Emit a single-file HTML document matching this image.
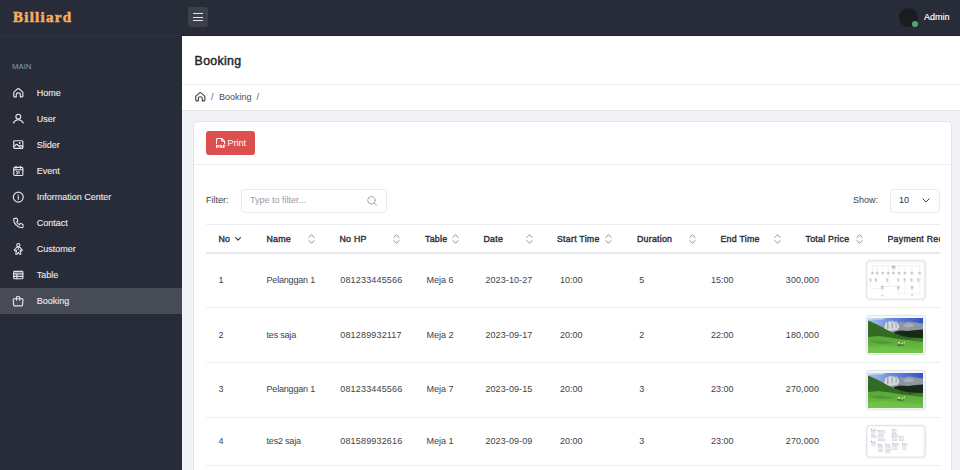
<!DOCTYPE html>
<html><head><meta charset="utf-8">
<style>
*{margin:0;padding:0;box-sizing:border-box}
html,body{width:960px;height:470px;overflow:hidden;background:#f2f3f7;font-family:"Liberation Sans",sans-serif}
.a{position:absolute;white-space:nowrap;line-height:1}
#side{position:absolute;left:0;top:0;width:182px;height:470px;background:#282c38}
#top{position:absolute;left:182px;top:0;width:778px;height:36px;background:#282c38;border-bottom:1px solid #1e2129}
.logo{left:13px;top:9px;font-family:"Liberation Serif",serif;font-weight:bold;font-size:16px;color:#f2a553;letter-spacing:0.6px}
.sb{position:absolute;left:0;top:35px;width:182px;height:1px;background:#30343e}
.main{left:12px;top:63.1px;font-size:7.75px;color:#9699a1}
.mi{position:absolute;left:0;width:182px;height:26px}
.mi.act{background:#474b55}
.mi>svg{position:absolute;left:13px;top:8px;width:10px;height:10px;overflow:visible}
.mi span{position:absolute;left:36.8px;top:8.6px;font-size:9px;line-height:1;color:#e8e9ec;white-space:nowrap;-webkit-text-stroke:0.12px #e8e9ec}
#ph{position:absolute;left:182px;top:36px;width:778px;height:49px;background:#fff;border-bottom:1px solid #eef0f3}
#bc{position:absolute;left:182px;top:85px;width:778px;height:26px;background:#fff;border-bottom:1px solid #e6e8ec}
#card{position:absolute;left:193px;top:121px;width:759px;height:380px;background:#fff;border:1px solid #e2e4e9;border-radius:5px}
.th{font-size:8.8px;color:#30343c;top:234.5px;-webkit-text-stroke:0.4px #30343c;letter-spacing:0.25px}
.td{font-size:9px;color:#3d424a}
.sort{position:absolute;width:7px;height:10px;top:233.7px}
.hr{position:absolute;left:206px;width:734px;height:1px;background:#eceef1}
.img{position:absolute;left:865px;width:61px;background:#fff;border:1px solid #e9eaee;border-radius:4px;box-shadow:0 0 0 1px #f1f2f5;overflow:hidden}
</style></head><body>
<div id="side">
  <svg style="position:absolute;left:0;top:0" width="100" height="34"><text x="13" y="22.1" font-family="Liberation Serif" font-weight="bold" font-size="15" fill="#f4ae60" stroke="#f4ae60" stroke-width="0.55" textLength="58" lengthAdjust="spacing">Billiard</text></svg>
  <div class="sb"></div>
  <div class="a main">MAIN</div>
  <div class="mi" style="top:80px"><svg viewBox="0 0 10 10" fill="none" stroke="#e6e7ea" stroke-width="1.15" stroke-linecap="round" stroke-linejoin="round"><path d="M0.75 4.6Q0.75 4.2 1.1 3.9L4.7 0.8Q5.3 0.3 5.9 0.8L9.5 3.9Q9.85 4.2 9.85 4.6V7.9Q9.85 8.85 8.9 8.85H7.3V6.6Q7.3 4.8 5.3 4.8Q3.3 4.8 3.3 6.6V8.85H1.7Q0.75 8.85 0.75 7.9Z"/></svg><span>Home</span></div>
  <div class="mi" style="top:106px"><svg viewBox="0 0 10 10" fill="none" stroke="#e6e7ea" stroke-width="1.15" stroke-linecap="round" stroke-linejoin="round"><circle cx="5.3" cy="2.65" r="2.4"/><path d="M0.35 8.85Q2.2 5.7 5.3 5.7Q8.4 5.7 10.25 8.85"/></svg><span>User</span></div>
  <div class="mi" style="top:132px"><svg viewBox="0 0 10 10" fill="none" stroke="#e6e7ea" stroke-width="1.15" stroke-linecap="round" stroke-linejoin="round"><rect x="0.75" y="0.7" width="9.1" height="7.7" rx="1"/><path d="M0.9 6.6L3.2 4.5Q3.7 4.1 4.2 4.5L7.3 7.4M6.3 6.4L7.1 5.6Q7.6 5.2 8.1 5.6L9.8 7"/><circle cx="6.7" cy="3" r="0.35"/></svg><span>Slider</span></div>
  <div class="mi" style="top:158px"><svg viewBox="0 0 10 10" fill="none" stroke="#e6e7ea" stroke-width="1.15" stroke-linecap="round" stroke-linejoin="round"><rect x="0.75" y="1.3" width="9.1" height="8.2" rx="1"/><path d="M3 0.3V2.2M7.6 0.3V2.2M0.75 3.7H9.85"/><path d="M3.3 5.4H4.3V7.9H3.3M6 5.4V7.9M6 5.4L5.5 5.9" stroke-width="0.9"/></svg><span>Event</span></div>
  <div class="mi" style="top:184px"><svg viewBox="0 0 10 10" fill="none" stroke="#e6e7ea" stroke-width="1.15" stroke-linecap="round" stroke-linejoin="round"><circle cx="5.3" cy="5.1" r="4.95"/><path d="M5.3 4.6V7.3"/><circle cx="5.3" cy="2.9" r="0.2" fill="#e6e7ea"/></svg><span>Information Center</span></div>
  <div class="mi" style="top:210px"><svg viewBox="0 0 10 10" fill="none" stroke="#e6e7ea" stroke-width="1.15" stroke-linecap="round" stroke-linejoin="round"><svg x="0.6" y="0.35" width="9.4" height="9.4" viewBox="3 4 17 17" overflow="visible"><path d="M5 4h4l2 5l-2.5 1.5a11 11 0 0 0 5 5l1.5 -2.5l5 2v4a2 2 0 0 1 -2 2a16 16 0 0 1 -15 -15a2 2 0 0 1 2 -2" stroke-width="2.05"/></svg></svg><span>Contact</span></div>
  <div class="mi" style="top:236px"><svg viewBox="0 0 10 10" fill="none" stroke="#e6e7ea" stroke-width="1.15" stroke-linecap="round" stroke-linejoin="round"><circle cx="5.3" cy="1.05" r="1.55"/><path d="M3.6 3.3H7L9.4 6.1L8.3 7.1L7.2 6V7.3L7.8 9.6Q7.9 10.2 7.3 10.2H6.5L5.3 8.3L4.1 10.2H3.3Q2.7 10.2 2.8 9.6L3.4 7.3V6L2.3 7.1L1.2 6.1Z" stroke-width="1.05"/><path d="M5.3 4.3V5.6" stroke-width="0.9"/></svg><span>Customer</span></div>
  <div class="mi" style="top:262px"><svg viewBox="0 0 10 10" fill="none" stroke="#e6e7ea" stroke-width="1.15" stroke-linecap="round" stroke-linejoin="round"><rect x="0.75" y="1.4" width="9.1" height="7.3" rx="0.8"/><path d="M0.75 3.9H9.85M0.75 6.3H9.85M3.9 3.9V8.7"/><rect x="1.2" y="1.9" width="8.2" height="1.6" fill="#9a9ca3" stroke="none" opacity="0.6"/></svg><span>Table</span></div>
  <div class="mi act" style="top:288px"><svg viewBox="0 0 10 10" fill="none" stroke="#e6e7ea" stroke-width="1.15" stroke-linecap="round" stroke-linejoin="round"><path d="M1.1 2.75H9.1Q9.9 2.75 9.95 3.5L9.55 9Q9.5 9.8 8.7 9.8H1.5Q0.7 9.8 0.65 9L0.25 3.5Q0.3 2.75 1.1 2.75Z"/><path d="M3.4 4.2V1.9A1.7 1.7 0 0 1 6.8 1.9V4.2"/></svg><span>Booking</span></div>
</div>
<div id="top">
  <div style="position:absolute;left:6px;top:7px;width:20px;height:20px;background:#3c404a;border-radius:3px"></div>
  <div style="position:absolute;left:11px;top:13px;width:10px;height:1.4px;background:#e4e5e8"></div>
  <div style="position:absolute;left:11px;top:16.5px;width:10px;height:1.4px;background:#e4e5e8"></div>
  <div style="position:absolute;left:11px;top:19.8px;width:10px;height:1.4px;background:#e4e5e8"></div>
  <div style="position:absolute;left:716.5px;top:7.5px;width:19px;height:19px;background:#1b1c1f;border-radius:50%"></div>
  <div style="position:absolute;left:729.8px;top:20.5px;width:6.5px;height:6.5px;background:#4fa775;border-radius:50%"></div>
  <div class="a" style="left:742px;top:12.6px;font-size:9px;color:#fff;-webkit-text-stroke:0.15px #fff">Admin</div>
</div>
<div id="ph"><div class="a" style="left:12.6px;top:18.5px;font-size:12.3px;color:#22262d;-webkit-text-stroke:0.45px #22262d;letter-spacing:0.35px">Booking</div></div>
<div id="bc">
  <svg style="position:absolute;left:12.5px;top:7.2px;width:10px;height:10px;overflow:visible" viewBox="0 0 10 10" fill="none" stroke="#3b3f47" stroke-width="1.1" stroke-linecap="round" stroke-linejoin="round"><path d="M0.75 4.6Q0.75 4.2 1.1 3.9L4.7 0.8Q5.3 0.3 5.9 0.8L9.5 3.9Q9.85 4.2 9.85 4.6V7.9Q9.85 8.85 8.9 8.85H7.3V6.6Q7.3 4.8 5.3 4.8Q3.3 4.8 3.3 6.6V8.85H1.7Q0.75 8.85 0.75 7.9Z"/></svg>
  <div class="a" style="left:29px;top:7.5px;font-size:9px;color:#5c6068">/</div>
  <div class="a" style="left:37px;top:7.5px;font-size:9px;color:#4a4e56">Booking</div>
  <div class="a" style="left:74.5px;top:7.5px;font-size:9px;color:#5c6068">/</div>
</div>
<div id="card"></div>
<!-- print button -->
<div style="position:absolute;left:206px;top:131px;width:49px;height:24px;background:#dd4f4f;border-radius:3px"></div>
<svg style="position:absolute;left:216.3px;top:137.8px;width:9.6px;height:10.6px" viewBox="4 2.2 16.8 18.6" fill="none" stroke="#fff" stroke-width="1.9" stroke-linecap="round" stroke-linejoin="round"><path d="M14 3v4a1 1 0 0 0 1 1h4"/><path d="M5 12v-7a2 2 0 0 1 2 -2h7l5 5v4"/><path d="M5 18h1.5a1.5 1.5 0 0 0 0 -3h-1.5v6"/><path d="M17 18h2"/><path d="M20 15h-3v6"/><path d="M11 15v6h1a2 2 0 0 0 2 -2v-2a2 2 0 0 0 -2 -2h-1z"/></svg>
<div class="a" style="left:227.5px;top:139px;font-size:9px;color:#fff">Print</div>
<div style="position:absolute;left:194px;top:164px;width:757px;height:1px;background:#eef0f3"></div>
<!-- filter -->
<div class="a td" style="left:206px;top:195.7px;color:#3d424a">Filter:</div>
<div style="position:absolute;left:241px;top:189px;width:146px;height:24px;border:1px solid #e9eaee;border-radius:4px;background:#fff"></div>
<div class="a" style="left:250px;top:195.7px;font-size:9px;color:#9a9ea6">Type to filter...</div>
<svg style="position:absolute;left:366.7px;top:196px;width:10.3px;height:9.6px" viewBox="0 0 10.3 9.6" fill="none" stroke="#a3a6ad" stroke-width="0.95" stroke-linecap="round"><circle cx="4.4" cy="4.3" r="3.7"/><path d="M7.1 7L9.6 9.1"/></svg>
<div class="a td" style="left:853px;top:195.7px;color:#3d424a">Show:</div>
<div style="position:absolute;left:890px;top:189px;width:50px;height:24px;border:1px solid #e9eaee;border-radius:4px;background:#fff"></div>
<div class="a td" style="left:899px;top:195.7px;color:#2c3038">10</div>
<svg style="position:absolute;left:921.5px;top:198px;width:8px;height:5px" viewBox="0 0 8 5" fill="none" stroke="#3a3e46" stroke-width="0.95" stroke-linecap="round" stroke-linejoin="round"><path d="M0.8 0.8L4 4L7.2 0.8"/></svg>
<!-- table header -->
<div class="hr" style="top:224px"></div>
<div class="hr" style="top:252px;height:2px;background:#e6e8ec"></div>
<div class="a th" style="left:218.5px">No</div>
<svg style="position:absolute;left:234.8px;top:236.6px;width:6.2px;height:4px" viewBox="0 0 6.2 4" fill="none" stroke="#33373f" stroke-width="1.15" stroke-linecap="round" stroke-linejoin="round"><path d="M0.7 0.7L3.1 3.1L5.5 0.7"/></svg>
<div class="a th" style="left:266.5px">Name</div>
<div class="a th" style="left:339.5px">No HP</div>
<div class="a th" style="left:425px">Table</div>
<div class="a th" style="left:483.5px">Date</div>
<div class="a th" style="left:557px">Start Time</div>
<div class="a th" style="left:637px">Duration</div>
<div class="a th" style="left:720.5px">End Time</div>
<div class="a th" style="left:805.5px">Total Price</div>
<div style="position:absolute;left:887.5px;top:230px;width:52.5px;height:16px;overflow:hidden"><div class="a th" style="left:0;top:4.5px">Payment Receipt</div></div>
<svg class="sort" style="left:307.5px" viewBox="0 0 7 10" fill="none" stroke="#8a8e96" stroke-width="1" stroke-linecap="round" stroke-linejoin="round"><path d="M0.8 3.4L3.5 0.8L6.2 3.4M0.8 6.6L3.5 9.2L6.2 6.6"/></svg>
<svg class="sort" style="left:393px" viewBox="0 0 7 10" fill="none" stroke="#8a8e96" stroke-width="1" stroke-linecap="round" stroke-linejoin="round"><path d="M0.8 3.4L3.5 0.8L6.2 3.4M0.8 6.6L3.5 9.2L6.2 6.6"/></svg>
<svg class="sort" style="left:452px" viewBox="0 0 7 10" fill="none" stroke="#8a8e96" stroke-width="1" stroke-linecap="round" stroke-linejoin="round"><path d="M0.8 3.4L3.5 0.8L6.2 3.4M0.8 6.6L3.5 9.2L6.2 6.6"/></svg>
<svg class="sort" style="left:525.5px" viewBox="0 0 7 10" fill="none" stroke="#8a8e96" stroke-width="1" stroke-linecap="round" stroke-linejoin="round"><path d="M0.8 3.4L3.5 0.8L6.2 3.4M0.8 6.6L3.5 9.2L6.2 6.6"/></svg>
<svg class="sort" style="left:604.5px" viewBox="0 0 7 10" fill="none" stroke="#8a8e96" stroke-width="1" stroke-linecap="round" stroke-linejoin="round"><path d="M0.8 3.4L3.5 0.8L6.2 3.4M0.8 6.6L3.5 9.2L6.2 6.6"/></svg>
<svg class="sort" style="left:688.5px" viewBox="0 0 7 10" fill="none" stroke="#8a8e96" stroke-width="1" stroke-linecap="round" stroke-linejoin="round"><path d="M0.8 3.4L3.5 0.8L6.2 3.4M0.8 6.6L3.5 9.2L6.2 6.6"/></svg>
<svg class="sort" style="left:773.5px" viewBox="0 0 7 10" fill="none" stroke="#8a8e96" stroke-width="1" stroke-linecap="round" stroke-linejoin="round"><path d="M0.8 3.4L3.5 0.8L6.2 3.4M0.8 6.6L3.5 9.2L6.2 6.6"/></svg>
<svg class="sort" style="left:855.5px" viewBox="0 0 7 10" fill="none" stroke="#8a8e96" stroke-width="1" stroke-linecap="round" stroke-linejoin="round"><path d="M0.8 3.4L3.5 0.8L6.2 3.4M0.8 6.6L3.5 9.2L6.2 6.6"/></svg>
<!-- rows -->
<div style="position:absolute;left:865.5px;top:260px;width:60px;height:40px;background:#f6f6f9;border:1px solid #e4e5eb;border-radius:4.5px;overflow:hidden;box-shadow:0 0 1.5px rgba(40,44,70,0.13)"><svg width="55" height="35" viewBox="0 0 55 35" style="position:absolute;left:1.5px;top:1.5px;background:#fff" fill="none" stroke="#d2d4d8" stroke-width="0.3"><path d="M3.7 2.8H51.5M4.4 2.8V8.5M9.2 2.8V8.5M14.6 2.8V8.5M20.2 2.8V8.5M25.5 2.8V8.5M31 2.8V8.5M36.9 2.8V8.5M43.8 2.8V8.5M51.6 2.8V8.5M2.6 19V25.5H14.3M14.3 23.4H30.3M21 12V23.4M30 25V30.8H52M37 19V30.8M52 12V30.8M44.1 26.5V31"/><g stroke="none"><circle cx="25.5" cy="4.2" r="2.3" fill="#dadbde"/><rect x="24.5" y="2.8" width="2" height="1.6" fill="#a9abb0"/><circle cx="4.4" cy="10.3" r="1.7" fill="#e3e4e7"/><rect x="3.7" y="9.2" width="1.4" height="1.3" fill="#b5b7bc"/><circle cx="9.2" cy="10.3" r="1.7" fill="#e3e4e7"/><rect x="8.5" y="9.2" width="1.4" height="1.3" fill="#b5b7bc"/><circle cx="14.6" cy="10.3" r="1.7" fill="#e3e4e7"/><rect x="13.9" y="9.2" width="1.4" height="1.3" fill="#b5b7bc"/><circle cx="20.2" cy="10.3" r="1.7" fill="#e3e4e7"/><rect x="19.5" y="9.2" width="1.4" height="1.3" fill="#b5b7bc"/><circle cx="25.5" cy="10.3" r="1.7" fill="#e3e4e7"/><rect x="24.8" y="9.2" width="1.4" height="1.3" fill="#b5b7bc"/><circle cx="31" cy="10.3" r="1.7" fill="#e3e4e7"/><rect x="30.3" y="9.2" width="1.4" height="1.3" fill="#b5b7bc"/><circle cx="36.9" cy="10.3" r="1.7" fill="#e3e4e7"/><rect x="36.2" y="9.2" width="1.4" height="1.3" fill="#b5b7bc"/><circle cx="43.8" cy="10.3" r="1.7" fill="#e3e4e7"/><rect x="43.1" y="9.2" width="1.4" height="1.3" fill="#b5b7bc"/><circle cx="51.6" cy="10.3" r="1.7" fill="#e3e4e7"/><rect x="50.9" y="9.2" width="1.4" height="1.3" fill="#b5b7bc"/><rect x="1.6" y="15.6" width="2" height="3.4" fill="#d6d7db"/><rect x="1.6" y="15.6" width="1" height="1" fill="#aeb0b5"/><rect x="7.0" y="15.6" width="2" height="3.4" fill="#d6d7db"/><rect x="7.0" y="15.6" width="1" height="1" fill="#aeb0b5"/><rect x="18.1" y="15.6" width="2" height="3.4" fill="#d6d7db"/><rect x="18.1" y="15.6" width="1" height="1" fill="#aeb0b5"/><rect x="29.3" y="15.6" width="2" height="3.4" fill="#d6d7db"/><rect x="29.3" y="15.6" width="1" height="1" fill="#aeb0b5"/><rect x="35.7" y="15.6" width="2" height="3.4" fill="#d6d7db"/><rect x="35.7" y="15.6" width="1" height="1" fill="#aeb0b5"/><rect x="42.6" y="15.6" width="2" height="3.4" fill="#d6d7db"/><rect x="42.6" y="15.6" width="1" height="1" fill="#aeb0b5"/><rect x="49.5" y="15.6" width="2" height="3.4" fill="#d6d7db"/><rect x="49.5" y="15.6" width="1" height="1" fill="#aeb0b5"/><rect x="12.9" y="22.8" width="2.8" height="3.7" rx="0.6" fill="#d6d7db"/><rect x="13.7" y="23.3" width="1.2" height="1" fill="#a9abb0"/><rect x="28.9" y="22.8" width="2.8" height="3.7" rx="0.6" fill="#d6d7db"/><rect x="29.7" y="23.3" width="1.2" height="1" fill="#a9abb0"/><rect x="42.7" y="22.8" width="2.8" height="3.7" rx="0.6" fill="#d6d7db"/><rect x="43.5" y="23.3" width="1.2" height="1" fill="#a9abb0"/><rect x="13.1" y="31.3" width="2.4" height="2.2" fill="#dcdde0"/><rect x="42.9" y="31.3" width="2.4" height="2.2" fill="#dcdde0"/></g></svg></div>
<div style="position:absolute;left:865.5px;top:315px;width:60px;height:40px;background:#f6f6f9;border:1px solid #e4e5eb;border-radius:4.5px;overflow:hidden;box-shadow:0 0 1.5px rgba(40,44,70,0.13)"><svg width="55" height="35" viewBox="0 0 55 35" preserveAspectRatio="none" style="position:absolute;left:1.5px;top:1.5px">
<defs><linearGradient id="ska" x1="0" y1="0" x2="1" y2="0"><stop offset="0" stop-color="#a9c3ee"/><stop offset="0.4" stop-color="#6d8de2"/><stop offset="1" stop-color="#3253c8"/></linearGradient>
<linearGradient id="mda" x1="0" y1="0" x2="0" y2="1"><stop offset="0" stop-color="#58a638"/><stop offset="1" stop-color="#6cbd45"/></linearGradient></defs>
<rect width="55" height="35" fill="url(#ska)"/>
<path d="M0 0H18L14 1.8L6 1.6L0 2.6Z" fill="#e4ebf6" opacity="0.6"/>
<path d="M14 14L16 5.5L18 3.5L19.5 4.5L21 2.5L23 3.2L24.5 2.2L26.5 3.8L28.5 3L30.5 4.8L33 4L36 4.6L40 3.4L44 3.8L48 4.6L52 5.2L55 5.6V16H14Z" fill="#8e95a3"/>
<path d="M16 11L17 5.5L18.5 4L20 5L21 3L23 3.6L24.5 2.6L26 4.2L28.5 3.6L30 5.5L31.5 9L29 12L22 13Z" fill="#d4d7de"/>
<path d="M19 5L20.2 4L20.6 10.5L19 11.5ZM23.5 3.8L24.5 3L25 10L23.8 10.8ZM27.5 4.2L28.5 3.9L28.8 9.5L27.6 10Z" fill="#9ea4b0"/>
<path d="M35 7L39 5L43 5.5L47 7L44 9L38 9.5Z" fill="#aeb3bf" opacity="0.8"/>
<path d="M26 14L32 12.5L40 13L48 12L55 11.5V23H26Z" fill="#172a17"/>
<path d="M0 2.5L6 5L13 8.5L20 12.5L27 15.5L34 18L42 19.5L55 20V35H0Z" fill="#336b25"/>
<path d="M0 19L10 18L22 19.5L34 21.5L46 22.5L55 23V35H0Z" fill="url(#mda)"/>
<path d="M0 23L14 22.5L28 25L12 26Z" fill="#3f8a2c" opacity="0.55"/>
<path d="M0 29L20 28L40 30.5L55 32V35H0Z" fill="#78c84c" opacity="0.6"/>
<path d="M44 20L50 20.5L55 20.2V24L46 23Z" fill="#3e7e2d"/>
<g fill="#d8d3b4"><rect x="30" y="24" width="2" height="1.6"/><rect x="33" y="25" width="1.8" height="1.5"/><rect x="35.5" y="23.6" width="1.5" height="1.6"/></g>
<path d="M29 26L36 26.5L35 28L30 28Z" fill="#2f5a22" opacity="0.6"/></svg></div>
<div style="position:absolute;left:865.5px;top:370px;width:60px;height:40px;background:#f6f6f9;border:1px solid #e4e5eb;border-radius:4.5px;overflow:hidden;box-shadow:0 0 1.5px rgba(40,44,70,0.13)"><svg width="55" height="35" viewBox="0 0 55 35" preserveAspectRatio="none" style="position:absolute;left:1.5px;top:1.5px">
<defs><linearGradient id="skb" x1="0" y1="0" x2="1" y2="0"><stop offset="0" stop-color="#a9c3ee"/><stop offset="0.4" stop-color="#6d8de2"/><stop offset="1" stop-color="#3253c8"/></linearGradient>
<linearGradient id="mdb" x1="0" y1="0" x2="0" y2="1"><stop offset="0" stop-color="#58a638"/><stop offset="1" stop-color="#6cbd45"/></linearGradient></defs>
<rect width="55" height="35" fill="url(#skb)"/>
<path d="M0 0H18L14 1.8L6 1.6L0 2.6Z" fill="#e4ebf6" opacity="0.6"/>
<path d="M14 14L16 5.5L18 3.5L19.5 4.5L21 2.5L23 3.2L24.5 2.2L26.5 3.8L28.5 3L30.5 4.8L33 4L36 4.6L40 3.4L44 3.8L48 4.6L52 5.2L55 5.6V16H14Z" fill="#8e95a3"/>
<path d="M16 11L17 5.5L18.5 4L20 5L21 3L23 3.6L24.5 2.6L26 4.2L28.5 3.6L30 5.5L31.5 9L29 12L22 13Z" fill="#d4d7de"/>
<path d="M19 5L20.2 4L20.6 10.5L19 11.5ZM23.5 3.8L24.5 3L25 10L23.8 10.8ZM27.5 4.2L28.5 3.9L28.8 9.5L27.6 10Z" fill="#9ea4b0"/>
<path d="M35 7L39 5L43 5.5L47 7L44 9L38 9.5Z" fill="#aeb3bf" opacity="0.8"/>
<path d="M26 14L32 12.5L40 13L48 12L55 11.5V23H26Z" fill="#172a17"/>
<path d="M0 2.5L6 5L13 8.5L20 12.5L27 15.5L34 18L42 19.5L55 20V35H0Z" fill="#336b25"/>
<path d="M0 19L10 18L22 19.5L34 21.5L46 22.5L55 23V35H0Z" fill="url(#mdb)"/>
<path d="M0 23L14 22.5L28 25L12 26Z" fill="#3f8a2c" opacity="0.55"/>
<path d="M0 29L20 28L40 30.5L55 32V35H0Z" fill="#78c84c" opacity="0.6"/>
<path d="M44 20L50 20.5L55 20.2V24L46 23Z" fill="#3e7e2d"/>
<g fill="#d8d3b4"><rect x="30" y="24" width="2" height="1.6"/><rect x="33" y="25" width="1.8" height="1.5"/><rect x="35.5" y="23.6" width="1.5" height="1.6"/></g>
<path d="M29 26L36 26.5L35 28L30 28Z" fill="#2f5a22" opacity="0.6"/></svg></div>
<div style="position:absolute;left:865.5px;top:424.7px;width:60px;height:33.7px;background:#f6f6f9;border:1px solid #e4e5eb;border-radius:4.5px;overflow:hidden;box-shadow:0 0 1.5px rgba(40,44,70,0.13)"><svg width="55" height="28.7" viewBox="0 0 55 28" style="position:absolute;left:1.5px;top:1.5px;background:#fff"><g stroke="none"><rect x="3" y="2.7" width="5.9" height="0.7" fill="#cfd1d6"/><rect x="3" y="4.0" width="4.4" height="0.7" fill="#cfd1d6"/><rect x="3" y="5.2" width="4.4" height="0.7" fill="#cfd1d6"/><rect x="3" y="6.5" width="4.4" height="0.7" fill="#cfd1d6"/><rect x="3" y="7.7" width="4.4" height="0.7" fill="#cfd1d6"/><rect x="3" y="8.9" width="5.9" height="0.7" fill="#cfd1d6"/><rect x="3" y="10.2" width="5.9" height="0.7" fill="#cfd1d6"/><rect x="3" y="1.4" width="1.1" height="1.1" fill="#8ea6d6"/><rect x="4.6" y="1.6" width="3.5" height="0.6" fill="#c4c7cd"/><rect x="9.8" y="4.1" width="7.9" height="0.7" fill="#cfd1d6"/><rect x="9.8" y="5.3" width="7.9" height="0.7" fill="#cfd1d6"/><rect x="9.8" y="6.6" width="5.9" height="0.7" fill="#cfd1d6"/><rect x="9.8" y="7.8" width="5.9" height="0.7" fill="#cfd1d6"/><rect x="9.8" y="9.1" width="5.9" height="0.7" fill="#cfd1d6"/><rect x="9.8" y="10.3" width="5.9" height="0.7" fill="#cfd1d6"/><rect x="9.8" y="11.6" width="7.9" height="0.7" fill="#cfd1d6"/><rect x="9.8" y="12.8" width="7.9" height="0.7" fill="#cfd1d6"/><rect x="9.8" y="2.8" width="1.1" height="1.1" fill="#8ea6d6"/><rect x="11.4" y="3.0" width="4.7" height="0.6" fill="#c4c7cd"/><rect x="23.8" y="3.2" width="4.6" height="0.7" fill="#cfd1d6"/><rect x="23.8" y="4.5" width="4.6" height="0.7" fill="#cfd1d6"/><rect x="23.8" y="5.7" width="4.6" height="0.7" fill="#cfd1d6"/><rect x="23.8" y="7.0" width="6.1" height="0.7" fill="#cfd1d6"/><rect x="23.8" y="8.2" width="6.1" height="0.7" fill="#cfd1d6"/><rect x="23.8" y="1.9" width="1.1" height="1.1" fill="#8ea6d6"/><rect x="25.4" y="2.1" width="3.7" height="0.6" fill="#c4c7cd"/><rect x="23.8" y="10.2" width="5.7" height="0.7" fill="#cfd1d6"/><rect x="23.8" y="11.5" width="5.7" height="0.7" fill="#cfd1d6"/><rect x="23.8" y="12.7" width="5.7" height="0.7" fill="#cfd1d6"/><rect x="23.8" y="8.9" width="1.1" height="1.1" fill="#8ea6d6"/><rect x="25.4" y="9.1" width="3.4" height="0.6" fill="#c4c7cd"/><rect x="30.9" y="10.2" width="5.1" height="0.7" fill="#cfd1d6"/><rect x="30.9" y="11.5" width="5.1" height="0.7" fill="#cfd1d6"/><rect x="30.9" y="12.7" width="5.1" height="0.7" fill="#cfd1d6"/><rect x="30.9" y="8.9" width="1.1" height="1.1" fill="#8ea6d6"/><rect x="32.5" y="9.1" width="3.1" height="0.6" fill="#c4c7cd"/><rect x="3" y="14.9" width="4.9" height="0.7" fill="#cfd1d6"/><rect x="3" y="16.1" width="4.9" height="0.7" fill="#cfd1d6"/><rect x="3" y="17.4" width="4.9" height="0.7" fill="#cfd1d6"/><rect x="3" y="13.6" width="1.1" height="1.1" fill="#8ea6d6"/><rect x="4.6" y="13.8" width="2.9" height="0.6" fill="#c4c7cd"/><rect x="9.8" y="17.7" width="4.2" height="0.7" fill="#cfd1d6"/><rect x="9.8" y="18.9" width="5.6" height="0.7" fill="#cfd1d6"/><rect x="9.8" y="20.2" width="5.6" height="0.7" fill="#cfd1d6"/><rect x="9.8" y="21.4" width="5.6" height="0.7" fill="#cfd1d6"/><rect x="9.8" y="22.7" width="5.6" height="0.7" fill="#cfd1d6"/><rect x="9.8" y="23.9" width="4.2" height="0.7" fill="#cfd1d6"/><rect x="9.8" y="16.4" width="1.1" height="1.1" fill="#8ea6d6"/><rect x="11.4" y="16.6" width="3.4" height="0.6" fill="#c4c7cd"/><rect x="17.3" y="17.7" width="4.6" height="0.7" fill="#cfd1d6"/><rect x="17.3" y="18.9" width="6.1" height="0.7" fill="#cfd1d6"/><rect x="17.3" y="20.2" width="6.1" height="0.7" fill="#cfd1d6"/><rect x="17.3" y="21.4" width="6.1" height="0.7" fill="#cfd1d6"/><rect x="17.3" y="22.7" width="6.1" height="0.7" fill="#cfd1d6"/><rect x="17.3" y="23.9" width="4.6" height="0.7" fill="#cfd1d6"/><rect x="17.3" y="25.2" width="4.6" height="0.7" fill="#cfd1d6"/><rect x="17.3" y="16.4" width="1.1" height="1.1" fill="#8ea6d6"/><rect x="18.9" y="16.6" width="3.7" height="0.6" fill="#c4c7cd"/><rect x="24.3" y="16.7" width="7.0" height="0.7" fill="#cfd1d6"/><rect x="24.3" y="17.9" width="5.2" height="0.7" fill="#cfd1d6"/><rect x="24.3" y="19.2" width="5.2" height="0.7" fill="#cfd1d6"/><rect x="24.3" y="20.4" width="5.2" height="0.7" fill="#cfd1d6"/><rect x="24.3" y="21.7" width="5.2" height="0.7" fill="#cfd1d6"/><rect x="24.3" y="15.4" width="1.1" height="1.1" fill="#8ea6d6"/><rect x="25.9" y="15.6" width="4.2" height="0.6" fill="#c4c7cd"/><rect x="34.1" y="16.7" width="5.7" height="0.7" fill="#cfd1d6"/><rect x="34.1" y="17.9" width="4.3" height="0.7" fill="#cfd1d6"/><rect x="34.1" y="19.2" width="4.3" height="0.7" fill="#cfd1d6"/><rect x="34.1" y="20.4" width="4.3" height="0.7" fill="#cfd1d6"/><rect x="34.1" y="21.7" width="4.3" height="0.7" fill="#cfd1d6"/><rect x="34.1" y="15.4" width="1.1" height="1.1" fill="#8ea6d6"/><rect x="35.7" y="15.6" width="3.4" height="0.6" fill="#c4c7cd"/></g></svg></div>
<div class="a td" style="left:218.5px;top:275.7px">1</div>
<div class="a td" style="left:266.5px;top:275.7px;letter-spacing:-0.19px">Pelanggan 1</div>
<div class="a td" style="left:340.25px;top:275.7px;letter-spacing:0.17px">081233445566</div>
<div class="a td" style="left:426.5px;top:275.7px">Meja 6</div>
<div class="a td" style="left:485.4px;top:275.7px;letter-spacing:0.1px">2023-10-27</div>
<div class="a td" style="left:560px;top:275.7px">10:00</div>
<div class="a td" style="left:639.3px;top:275.7px">5</div>
<div class="a td" style="left:711px;top:275.7px">15:00</div>
<div class="a td" style="left:785.8px;top:275.7px;letter-spacing:0.1px">300,000</div>
<div class="a td" style="left:218.5px;top:330.7px">2</div>
<div class="a td" style="left:266.5px;top:330.7px;letter-spacing:-0.19px">tes saja</div>
<div class="a td" style="left:340.25px;top:330.7px;letter-spacing:0.17px">081289932117</div>
<div class="a td" style="left:426.5px;top:330.7px">Meja 2</div>
<div class="a td" style="left:485.4px;top:330.7px;letter-spacing:0.1px">2023-09-17</div>
<div class="a td" style="left:560px;top:330.7px">20:00</div>
<div class="a td" style="left:639.3px;top:330.7px">2</div>
<div class="a td" style="left:711px;top:330.7px">22:00</div>
<div class="a td" style="left:785.8px;top:330.7px;letter-spacing:0.1px">180,000</div>
<div class="a td" style="left:218.5px;top:385.3px">3</div>
<div class="a td" style="left:266.5px;top:385.3px;letter-spacing:-0.19px">Pelanggan 1</div>
<div class="a td" style="left:340.25px;top:385.3px;letter-spacing:0.17px">081233445566</div>
<div class="a td" style="left:426.5px;top:385.3px">Meja 7</div>
<div class="a td" style="left:485.4px;top:385.3px;letter-spacing:0.1px">2023-09-15</div>
<div class="a td" style="left:560px;top:385.3px">20:00</div>
<div class="a td" style="left:639.3px;top:385.3px">3</div>
<div class="a td" style="left:711px;top:385.3px">23:00</div>
<div class="a td" style="left:785.8px;top:385.3px;letter-spacing:0.1px">270,000</div>
<div class="a td" style="left:218.5px;top:436.9px">4</div>
<div class="a td" style="left:266.5px;top:436.9px;letter-spacing:-0.19px">tes2 saja</div>
<div class="a td" style="left:340.25px;top:436.9px;letter-spacing:0.17px">081589932616</div>
<div class="a td" style="left:426.5px;top:436.9px">Meja 1</div>
<div class="a td" style="left:485.4px;top:436.9px;letter-spacing:0.1px">2023-09-09</div>
<div class="a td" style="left:560px;top:436.9px">20:00</div>
<div class="a td" style="left:639.3px;top:436.9px">3</div>
<div class="a td" style="left:711px;top:436.9px">23:00</div>
<div class="a td" style="left:785.8px;top:436.9px;letter-spacing:0.1px">270,000</div>
<div class="hr" style="top:307px"></div>
<div class="hr" style="top:362px"></div>
<div class="hr" style="top:417px"></div>
<div class="hr" style="top:465px"></div>
</body></html>
